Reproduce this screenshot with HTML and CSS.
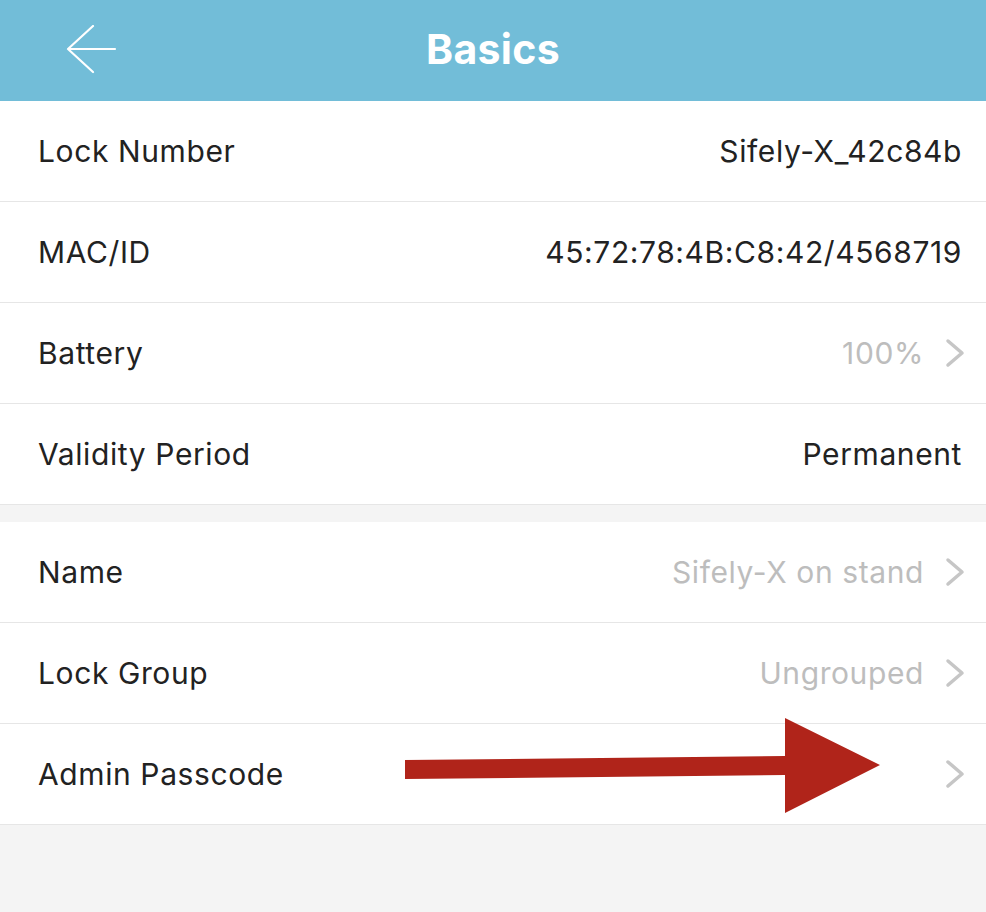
FILE: index.html
```html
<!DOCTYPE html>
<html lang="en">
<head>
    <meta charset="UTF-8">
    <meta name="viewport" content="width=device-width, initial-scale=1.0">
    <title>Basics</title>
    <link rel="stylesheet" href="styles.css">
</head>
<body>
    <header class="topbar">
        <a class="back" href="#" aria-label="Back">
            <svg width="52" height="50" viewBox="0 0 52 50">
                <path d="M3 24 H50 M28 1 L3 24 L28 47" fill="none" stroke="#fff" stroke-width="2.2" stroke-linecap="round" stroke-linejoin="round"/>
            </svg>
        </a>
        <h1>Basics</h1>
    </header>
    <main>
        <section class="group">
            <div class="row">
                <span class="label">Lock Number</span>
                <span class="value">Sifely-X_42c84b</span>
            </div>
            <div class="row">
                <span class="label">MAC/ID</span>
                <span class="value">45:72:78:4B:C8:42/4568719</span>
            </div>
            <a class="row link" href="#">
                <span class="label">Battery</span>
                <span class="value muted">100%</span>
                <svg class="chevron" width="20" height="30" viewBox="0 0 20 30"><path d="M3 3 L17 15 L3 27" /></svg>
            </a>
            <div class="row">
                <span class="label">Validity Period</span>
                <span class="value">Permanent</span>
            </div>
        </section>
        <section class="group">
            <a class="row link" href="#">
                <span class="label">Name</span>
                <span class="value muted">Sifely-X on stand</span>
                <svg class="chevron" width="20" height="30" viewBox="0 0 20 30"><path d="M3 3 L17 15 L3 27" /></svg>
            </a>
            <a class="row link" href="#">
                <span class="label">Lock Group</span>
                <span class="value muted">Ungrouped</span>
                <svg class="chevron" width="20" height="30" viewBox="0 0 20 30"><path d="M3 3 L17 15 L3 27" /></svg>
            </a>
            <a class="row link" href="#">
                <span class="label">Admin Passcode</span>
                <span class="value muted"></span>
                <svg class="chevron" width="20" height="30" viewBox="0 0 20 30"><path d="M3 3 L17 15 L3 27" /></svg>
            </a>
        </section>
    </main>
    <!-- callout pointing at the passcode row -->
    <svg class="callout" width="986" height="912" viewBox="0 0 986 912">
        <polygon points="405,760 785,756 785,718 880,765 785,813 785,775 405,779" fill="#b0241a"/>
    </svg>
</body>
</html>
```

FILE: styles.css
```css
body {
    margin: 0;
    font-family: "Inter", "Liberation Sans", sans-serif;
    background-color: #f4f4f4;
    color: #222;
}
.topbar {
    height: 101px;
    background-color: #72bdd8;
    display: flex;
    align-items: center;
    justify-content: center;
    position: relative;
}
.topbar h1 {
    margin: 0;
    color: #fff;
    font-size: 41px;
    font-weight: 700;
    letter-spacing: 0.3px;
    padding-bottom: 4px;
}
.back {
    position: absolute;
    left: 65px;
    top: 25px;
    display: block;
    line-height: 0;
}
.group {
    background: #fff;
    margin-bottom: 17px;
}
.row {
    height: 100px;
    border-bottom: 1px solid #e6e6e6;
    display: flex;
    align-items: center;
    padding: 0 24px 0 38px;
    font-size: 30px;
    letter-spacing: 0.6px;
    color: #222;
    text-decoration: none;
}
.row.link {
    padding-right: 21px;
}
.label {
    flex: 1;
}
.value {
    text-align: right;
}
.muted {
    color: #bdbdbd;
}
.chevron {
    margin-left: 21px;
    fill: none;
    stroke: #c6c6c6;
    stroke-width: 3.5;
    stroke-linecap: round;
    stroke-linejoin: round;
}
.callout {
    position: absolute;
    left: 0;
    top: 0;
    pointer-events: none;
}
```
